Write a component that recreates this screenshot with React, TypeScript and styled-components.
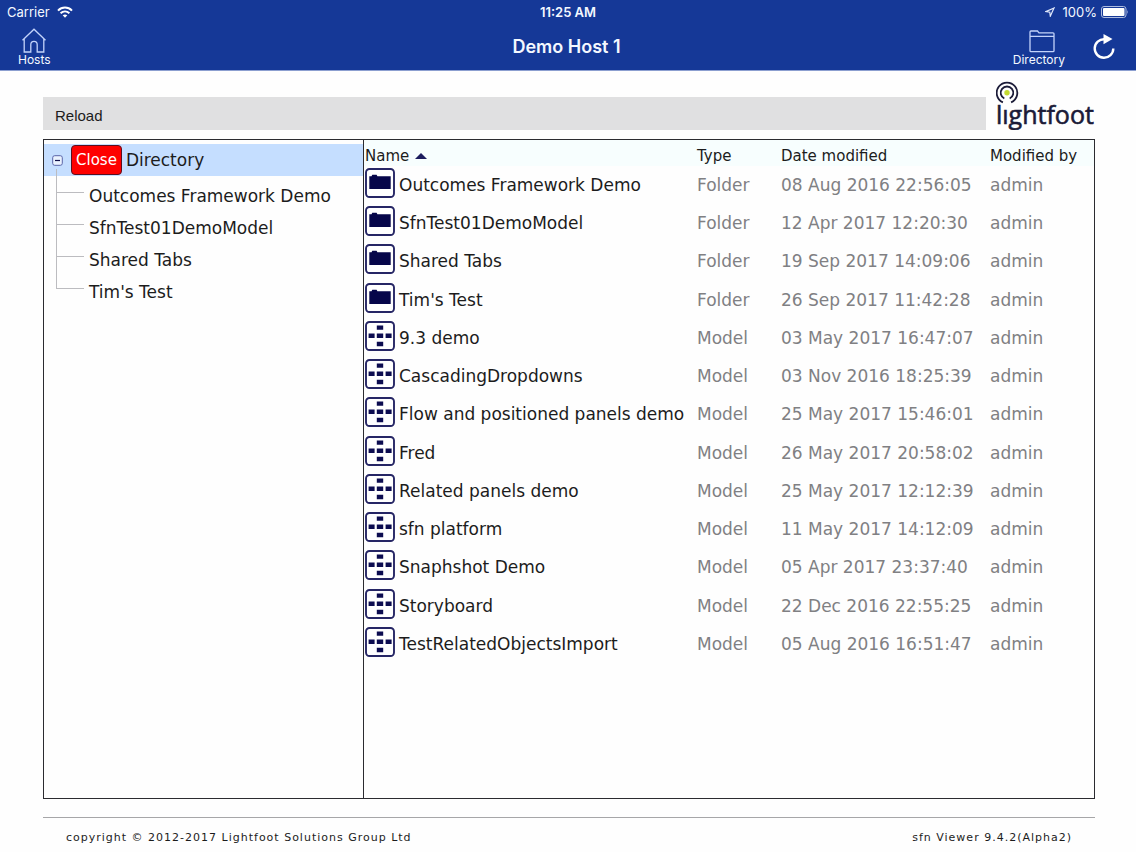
import React from 'react';
import styled, { createGlobalStyle } from 'styled-components';

const navy = '#10104a';
const ui = `Inter, "Liberation Sans", sans-serif`;
const body = `"DejaVu Sans", sans-serif`;

const GlobalStyle = createGlobalStyle`
  *, *::before, *::after { box-sizing: border-box; }
  body { margin: 0; background: #fefefe; color: #1c1c1c; font-family: ${body}; }
  button { font: inherit; color: inherit; background: none; border: 0; padding: 0; cursor: pointer; }
  a { color: inherit; text-decoration: none; }
  svg { display: block; flex: none; }
`;

const Page = styled.div`
  min-height: 100vh;
  display: flex;
  flex-direction: column;
`;

const TopBar = styled.header`
  background: #153897;
  color: #f4f8ff;
  font-family: ${ui};
  border-bottom: 1px solid #8c9fd0;
`;

const StatusRow = styled.div`
  display: grid;
  grid-template-columns: 1fr auto 1fr;
  align-items: center;
  height: 23px;
  padding: 0 7px;
  font-size: 13px;
  line-height: 16px;
`;

const StatusGroup = styled.div<{ $end?: boolean }>`
  display: flex;
  align-items: center;
  justify-content: ${(p) => (p.$end ? 'flex-end' : 'flex-start')};
  gap: ${(p) => (p.$end ? 4 : 7)}px;
`;

const Clock = styled.time`
  font-weight: 600;
`;

const NavRow = styled.nav`
  display: grid;
  grid-template-columns: 1fr auto 1fr;
  align-items: center;
  height: 47px;
  padding: 0 21px 0 18px;
`;

const NavGroup = styled.div<{ $end?: boolean }>`
  display: flex;
  align-items: center;
  justify-content: ${(p) => (p.$end ? 'flex-end' : 'flex-start')};
  gap: 28px;
`;

const NavButton = styled.button`
  display: flex;
  flex-direction: column;
  align-items: center;
  font-size: 12px;
  line-height: 14px;
`;

const Title = styled.h1`
  margin: 0;
  font-size: 18px;
  line-height: 24px;
  font-weight: 600;
`;

const Main = styled.main`
  flex: 1;
  display: flex;
  flex-direction: column;
  padding: 10px 41px 18px 43px;
`;

const ToolRow = styled.div`
  display: flex;
  align-items: flex-end;
  gap: 10px;
`;

const Toolbar = styled.div`
  flex: 1;
  display: flex;
  align-items: center;
  height: 33px;
  padding: 4px 12px 0;
  background: #e0e0e1;
  font-family: "Liberation Sans", Arial, sans-serif;
  font-size: 15px;
`;

const Explorer = styled.div`
  flex: 1;
  display: flex;
  margin-top: 9px;
  border: 1px solid #2b2b30;
`;

const TreePane = styled.aside`
  flex: none;
  width: 320px;
  padding-top: 4px;
  border-right: 1px solid #2b2b30;
`;

const TreeRoot = styled.div`
  display: flex;
  align-items: center;
  height: 32px;
  padding-left: 8px;
  background: #c5deff;
  font-size: 17px;
`;

const Toggle = styled.button`
  display: grid;
  place-items: center;
  margin-right: 8px;
`;

const CloseButton = styled.button`
  height: 30px;
  padding: 0 4px;
  margin-right: 4px;
  border: 1px solid #5a1020;
  border-radius: 4px;
  background: #fe0000;
  color: #fff;
  font-size: 15px;
`;

const TreeList = styled.ul`
  list-style: none;
  margin: 0 0 0 12px;
  padding: 1px 0 0;
`;

const TreeItem = styled.li`
  display: flex;
  align-items: center;
  height: 32px;
  padding-top: 6px;
  font-size: 17px;
  position: relative;
  padding-left: 33px;

  &::before {
    content: '';
    position: absolute;
    left: 0;
    top: -16px;
    width: 28px;
    height: 32px;
    border: solid #bcbcc0;
    border-width: 0 0 1px 1px;
  }

  &:first-child::before {
    top: -8px;
    height: 24px;
  }
`;

const ListPane = styled.section`
  flex: 1;
  min-width: 0;
`;

const FileTable = styled.table`
  width: 100%;
  border-collapse: collapse;
  table-layout: fixed;
  text-align: left;
`;

const HeadCell = styled.th<{ $width?: number }>`
  width: ${(p) => (p.$width ? `${p.$width}px` : 'auto')};
  height: 26px;
  padding: 5px 0 0 1px;
  background: #f7fefe;
  font-size: 15px;
  font-weight: 400;
  white-space: nowrap;
`;

const SortLabel = styled.button`
  display: flex;
  align-items: center;
  gap: 6px;
`;

const Row = styled.tr`
  height: 38px;

  &:nth-child(4n) {
    height: 39px;
  }
`;

const Cell = styled.td<{ $muted?: boolean }>`
  padding: 0 0 0 1px;
  font-size: 17px;
  white-space: nowrap;
  color: ${(p) => (p.$muted ? '#808083' : 'inherit')};
`;

const FileLink = styled.a`
  display: flex;
  align-items: center;
  gap: 4px;

  svg {
    margin-bottom: 4px;
  }
`;

const Footer = styled.footer`
  display: flex;
  justify-content: space-between;
  margin: 0 41px 0 43px;
  padding: 12px 23px 6px;
  border-top: 1px solid #a6a6a8;
  font-size: 11px;
  line-height: 16px;
  letter-spacing: 1px;
`;

const WifiIcon = () => (
  <svg width="16" height="12" viewBox="0 0 16 12" fill="none" stroke="#fff" strokeWidth="2">
    <path d="M1 4.600C5 .6 11 .6 15 4.600M3.600 7.300c2.600-2.400 6.200-2.400 8.800 0" />
    <path d="M8 11.700 5.700 9.300c1.300-1.200 3.300-1.200 4.600 0z" fill="#fff" stroke="none" />
  </svg>
);

const LocationIcon = () => (
  <svg width="14" height="10" viewBox="0 0 14 10" fill="none" stroke="#dfe7fa" strokeWidth="1.200">
    <path d="M9 1 .9 4.600l3.900.6.500 4z" />
  </svg>
);

const BatteryIcon = () => (
  <svg width="28" height="12" viewBox="0 0 28 12">
    <rect x=".5" y=".5" width="24.500" height="11" rx="2.500" fill="none" stroke="#aebce0" />
    <rect x="2" y="2" width="21.500" height="8" rx="1" fill="#fff" />
    <path d="M26.300 4v4q1.500-2 0-4" fill="#aebce0" />
  </svg>
);

const HomeIcon = () => (
  <svg width="26" height="26" viewBox="0 0 26 26" fill="none" stroke="#c3d3fa" strokeWidth="1.300">
    <path d="M1.500 13.200 13 2.200l11.500 11M3.200 11.800v13.200h6.600v-7.300c0-4.400 6.400-4.400 6.400 0v7.300h6.600V11.800" />
  </svg>
);

const DirectoryIcon = () => (
  <svg width="32" height="26" viewBox="-6 0 32 26" fill="none" stroke="#c3d3fa" strokeWidth="1.300">
    <path d="M1 23.700V5q0-1 1-1h6.500l1.500 1.800H24q1 0 1 1v16.900q0 1-1 1H2q-1 0-1-1zM1 9.300h24" />
  </svg>
);

const RefreshIcon = () => (
  <svg width="22" height="26" viewBox="0 0 22 26" fill="none" stroke="#fff" strokeWidth="2.400">
    <path d="M11.500 5.200A9.300 9.300 0 1 0 20.300 14.500" />
    <path d="M10.500 0 19.500 5l-9 5.300z" fill="#fff" stroke="none" />
  </svg>
);

const Logo = () => (
  <svg width="99" height="49" viewBox="0 0 99 49" role="img" aria-label="lightfoot">
    <g fill="none" stroke="#1b1b38" strokeWidth="1.800">
      <path d="M6.900 21.300a10.300 10.300 0 1 1 8.200 0" />
      <path d="M8.300 17.500a6.300 6.300 0 1 1 5.400 0" />
    </g>
    <circle cx="11" cy="11.800" r="2.700" fill="#c3d92f" />
    <text x="0" y="43" fontFamily="'Open Sans', sans-serif" fontSize="25" fill="#1b1b38" stroke="#1b1b38" strokeWidth=".6">
      lıghtfoot
    </text>
  </svg>
);

const CollapseIcon = () => (
  <svg width="11" height="11" viewBox="0 0 11 11" fill="#eaf2ff" stroke="#5a64a8">
    <rect x=".7" y=".7" width="9.600" height="9.600" rx="2" />
    <path d="M3 5.500h5" stroke={navy} strokeWidth="1.200" />
  </svg>
);

const SortIcon = () => (
  <svg width="12" height="6" viewBox="0 0 12 6" fill="#1d1d5e">
    <path d="M0 6 6 0l6 6z" />
  </svg>
);

const FolderIcon = () => (
  <svg width="30" height="30" viewBox="0 0 30 30">
    <rect x="1" y="1" width="28" height="28" rx="3.500" fill="#fff" stroke="#262665" strokeWidth="1.900" />
    <path d="M4.300 8.300H6.500l.8-1.600h4.300l.8 1.600h13.300V21H4.300z" fill="#06064a" />
  </svg>
);

const ModelIcon = () => (
  <svg width="30" height="30" viewBox="0 0 30 30">
    <rect x="1" y="1" width="28" height="28" rx="3.500" fill="#fff" stroke="#262665" strokeWidth="1.900" />
    <path
      d="M11.800 4.600h6.400v4.200h-6.400zM11.800 12.600h6.400v4.400h-6.400zM11.800 20.800h6.400v4.400h-6.400zM3.600 12.600h6v4.400h-6zM20.600 12.600h6v4.400h-6z"
      fill="#0c0c50"
    />
  </svg>
);

type FileRow = { name: string; type: 'Folder' | 'Model'; date: string };

const files: FileRow[] = [
  { name: 'Outcomes Framework Demo', type: 'Folder', date: '08 Aug 2016 22:56:05' },
  { name: 'SfnTest01DemoModel', type: 'Folder', date: '12 Apr 2017 12:20:30' },
  { name: 'Shared Tabs', type: 'Folder', date: '19 Sep 2017 14:09:06' },
  { name: "Tim's Test", type: 'Folder', date: '26 Sep 2017 11:42:28' },
  { name: '9.3 demo', type: 'Model', date: '03 May 2017 16:47:07' },
  { name: 'CascadingDropdowns', type: 'Model', date: '03 Nov 2016 18:25:39' },
  { name: 'Flow and positioned panels demo', type: 'Model', date: '25 May 2017 15:46:01' },
  { name: 'Fred', type: 'Model', date: '26 May 2017 20:58:02' },
  { name: 'Related panels demo', type: 'Model', date: '25 May 2017 12:12:39' },
  { name: 'sfn platform', type: 'Model', date: '11 May 2017 14:12:09' },
  { name: 'Snaphshot Demo', type: 'Model', date: '05 Apr 2017 23:37:40' },
  { name: 'Storyboard', type: 'Model', date: '22 Dec 2016 22:55:25' },
  { name: 'TestRelatedObjectsImport', type: 'Model', date: '05 Aug 2016 16:51:47' },
];

const folders = files.filter((f) => f.type === 'Folder');

export default function App() {
  return (
    <Page>
      <GlobalStyle />
      <TopBar>
        <StatusRow>
          <StatusGroup>
            Carrier
            <WifiIcon />
          </StatusGroup>
          <Clock>11:25 AM</Clock>
          <StatusGroup $end>
            <LocationIcon />
            100%
            <BatteryIcon />
          </StatusGroup>
        </StatusRow>
        <NavRow>
          <NavGroup>
            <NavButton>
              <HomeIcon />
              Hosts
            </NavButton>
          </NavGroup>
          <Title>Demo Host 1</Title>
          <NavGroup $end>
            <NavButton>
              <DirectoryIcon />
              Directory
            </NavButton>
            <NavButton aria-label="Refresh">
              <RefreshIcon />
            </NavButton>
          </NavGroup>
        </NavRow>
      </TopBar>
      <Main>
        <ToolRow>
          <Toolbar>
            <button>Reload</button>
          </Toolbar>
          <Logo />
        </ToolRow>
        <Explorer>
          <TreePane>
            <TreeRoot>
              <Toggle aria-label="Collapse">
                <CollapseIcon />
              </Toggle>
              <CloseButton>Close</CloseButton>
              Directory
            </TreeRoot>
            <TreeList>
              {folders.map((f) => (
                <TreeItem key={f.name}>
                  <a href="#folder">{f.name}</a>
                </TreeItem>
              ))}
            </TreeList>
          </TreePane>
          <ListPane>
            <FileTable>
              <thead>
                <tr>
                  <HeadCell>
                    <SortLabel>
                      Name <SortIcon />
                    </SortLabel>
                  </HeadCell>
                  <HeadCell $width={84}>Type</HeadCell>
                  <HeadCell $width={209}>Date modified</HeadCell>
                  <HeadCell $width={105}>Modified by</HeadCell>
                </tr>
              </thead>
              <tbody>
                {files.map((f) => (
                  <Row key={f.name}>
                    <Cell>
                      <FileLink href="#file">
                        {f.type === 'Folder' ? <FolderIcon /> : <ModelIcon />}
                        {f.name}
                      </FileLink>
                    </Cell>
                    <Cell $muted>{f.type}</Cell>
                    <Cell $muted>{f.date}</Cell>
                    <Cell $muted>admin</Cell>
                  </Row>
                ))}
              </tbody>
            </FileTable>
          </ListPane>
        </Explorer>
      </Main>
      <Footer>
        <span>copyright © 2012-2017 Lightfoot Solutions Group Ltd</span>
        <span>sfn Viewer 9.4.2(Alpha2)</span>
      </Footer>
    </Page>
  );
}
